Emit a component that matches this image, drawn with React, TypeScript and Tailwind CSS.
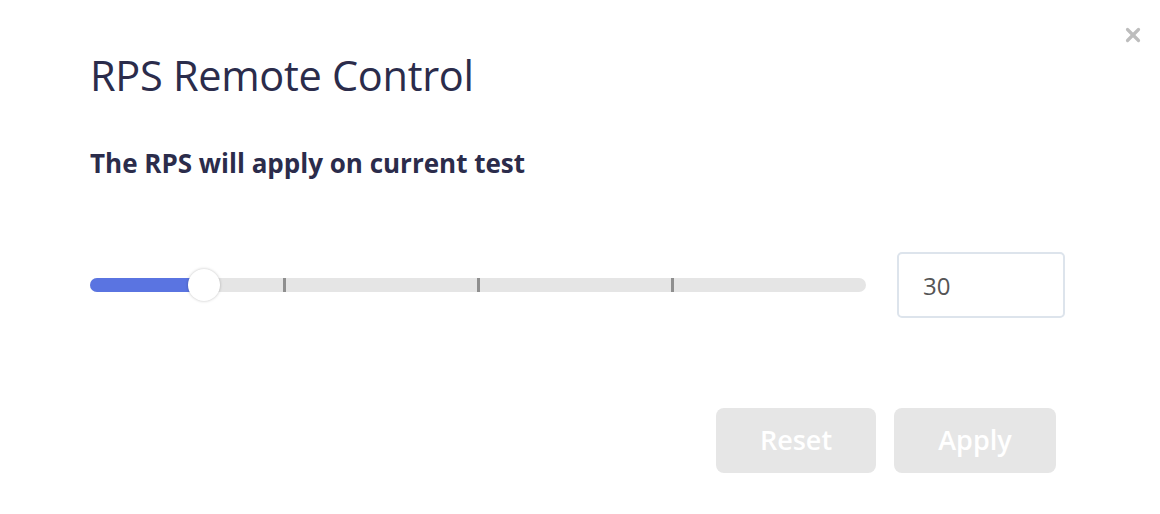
import { X } from "lucide-react";

const ticks = [194, 388, 582];

function RpsSlider({ value }: { value: number }) {
  // track is 776px wide, thumb sits at the end of the filled part
  const fill = 114;
  return (
    <div className="relative w-[776px] h-[32px] flex items-center">
      <div className="relative w-full h-[14px] rounded-full bg-[#e5e5e5]">
        <div className="absolute left-0 top-0 h-full w-[114px] rounded-full bg-[#5a74e1]" />
        {ticks.map((t) => (
          <div
            key={t}
            className="absolute top-0 h-full w-[3px] bg-[#8f8f8f]"
            style={{ left: t - 1 }}
          />
        ))}
      </div>
      <div
        className="absolute top-0 w-[32px] h-[32px] rounded-full bg-white shadow-[0_0_3px_rgba(0,0,0,0.25)]"
        style={{ left: fill - 16 }}
        aria-label={`value ${value}`}
      />
    </div>
  );
}

export default function App() {
  return (
    <div
      className="relative w-[1160px] h-[514px] bg-white text-[#2b2c4b]"
      style={{ fontFamily: '"Open Sans", sans-serif' }}
    >
      <button className="absolute top-[24px] right-[16px] text-[#bdbdbd]">
        <X size={22} strokeWidth={3.5} />
      </button>

      <div className="pl-[90px] pt-[50px]">
        <h2 className="text-[41.5px] leading-[50px] font-medium tracking-[-0.3px]">RPS Remote Control</h2>
        <p className="mt-[47px] text-[26px] leading-[32px] font-bold">
          The RPS will apply on current test
        </p>

        <div className="mt-[73px] flex items-center">
          <RpsSlider value={30} />
          <input
            className="ml-[31px] w-[168px] h-[66px] rounded-[5px] border-2 border-[#dde4ec] px-[24px] text-[24px] text-[#555] outline-none"
            defaultValue="30"
          />
        </div>
      </div>

      <div className="mt-[90px] pr-[104px] flex justify-end gap-[18px]">
        <button className="w-[160px] h-[65px] rounded-[8px] bg-[#e6e6e6] text-white text-[27px] font-semibold">
          Reset
        </button>
        <button className="w-[162px] h-[65px] rounded-[8px] bg-[#e6e6e6] text-white text-[27px] font-semibold">
          Apply
        </button>
      </div>
    </div>
  );
}
